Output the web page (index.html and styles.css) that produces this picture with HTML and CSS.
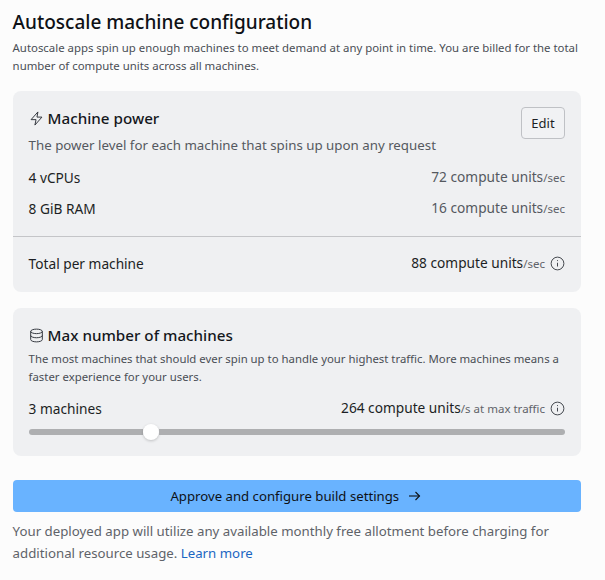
FILE: index.html
```html
<!DOCTYPE html>
<html lang="en">
<head>
  <meta charset="UTF-8">
  <meta name="viewport" content="width=device-width, initial-scale=1.0">
  <title>Autoscale machine configuration</title>
  <link rel="stylesheet" href="styles.css">
</head>
<body>

  <div class="page">
    <h1 class="title">Autoscale machine configuration</h1>
    <p class="intro">Autoscale apps spin up enough machines to meet demand at any point in time. You are billed for the total number of compute units across all machines.</p>

    <section class="card power-card">
      <div class="card-top">
        <div class="card-head">
          <h2 class="card-title">
            <svg class="head-icon" viewBox="0 0 16 16" fill="none" stroke="currentColor" stroke-width="1" stroke-linejoin="round"><path d="M9.5 1 2.2 9.2h5.3L6.3 15l7.5-8.5H8.5z"/></svg>
            Machine power
          </h2>
          <p class="card-sub">The power level for each machine that spins up upon any request</p>
        </div>
        <button class="edit-btn">Edit</button>
      </div>

      <div class="row spec-row">
        <span class="row-label">4 vCPUs</span>
        <span class="row-value muted">72 compute units<small>/sec</small></span>
      </div>
      <div class="row spec-row">
        <span class="row-label">8 GiB RAM</span>
        <span class="row-value muted">16 compute units<small>/sec</small></span>
      </div>

      <div class="row total-row">
        <span class="row-label">Total per machine</span>
        <span class="row-value">88 compute units<small>/sec</small>
          <svg class="info-icon" viewBox="0 0 16 16" fill="none" stroke="currentColor" stroke-width="1"><circle cx="8" cy="8" r="6.8"/><path d="M8 7.2v4"/><path d="M8 4.4v1"/></svg>
        </span>
      </div>
    </section>

    <section class="card machines-card">
      <h2 class="card-title">
        <svg class="head-icon" viewBox="0 0 16 16" fill="none" stroke="currentColor" stroke-width="1"><ellipse cx="8" cy="3.6" rx="6.2" ry="2.4"/><path d="M1.8 3.6v8.8c0 1.3 2.8 2.4 6.2 2.4s6.2-1.1 6.2-2.4V3.6"/><path d="M1.8 8c0 1.3 2.8 2.4 6.2 2.4s6.2-1.1 6.2-2.4"/></svg>
        Max number of machines
      </h2>
      <p class="machines-sub">The most machines that should ever spin up to handle your highest traffic. More machines means a faster experience for your users.</p>

      <div class="row machines-row">
        <span class="row-label">3 machines</span>
        <span class="row-value">264 compute units<small>/s at max traffic</small>
          <svg class="info-icon" viewBox="0 0 16 16" fill="none" stroke="currentColor" stroke-width="1"><circle cx="8" cy="8" r="6.8"/><path d="M8 7.2v4"/><path d="M8 4.4v1"/></svg>
        </span>
      </div>
      <div class="slider">
        <div class="slider-left"></div>
        <div class="slider-thumb"></div>
        <div class="slider-right"></div>
      </div>
    </section>

    <button class="approve-btn">
      Approve and configure build settings
      <svg class="arrow-icon" viewBox="0 0 16 16" fill="none" stroke="currentColor" stroke-width="1.1"><path d="M2 8h10.5"/><path d="M8.5 4l4 4-4 4"/></svg>
    </button>

    <p class="note">Your deployed app will utilize any available monthly free allotment before charging for<br>additional resource usage. <a href="#">Learn more</a></p>
  </div>

</body>
</html>
```

FILE: styles.css
```css
body {
  margin: 0;
  padding: 0;
  font-family: "Noto Sans", "Open Sans", sans-serif;
  background: #fcfcfc;
  color: #1c1f24;
}

.page {
  width: 568.4px;
  padding: 10px 0 0 12.6px;
}

.title {
  margin: 0;
  font-size: 19px;
  line-height: 24px;
  font-weight: 500;
  color: #0e1116;
}

.intro {
  margin: 5px 0 0;
  font-size: 11.4px;
  line-height: 18px;
  color: #4a4e55;
}

.card {
  background: #eff0f2;
  border-radius: 8px;
}

.power-card {
  margin-top: 16px;
  height: 201px;
  box-sizing: border-box;
  padding-top: 16px;
}

.card-top {
  display: flex;
  justify-content: space-between;
  padding: 0 16px;
}

.card-title {
  display: flex;
  align-items: center;
  gap: 4px;
  margin: 0;
  font-size: 15.2px;
  line-height: 22px;
  font-weight: 500;
  color: #14171c;
}

.head-icon {
  width: 15px;
  height: 15px;
  color: #2b2f36;
}

.card-sub {
  margin: 7px 0 0;
  font-size: 13.3px;
  line-height: 18px;
  color: #55595f;
}

.edit-btn {
  width: 44px;
  height: 32px;
  padding: 0;
  font-family: inherit;
  font-size: 13px;
  color: #1c1f24;
  background: #f1f2f4;
  border: 1px solid #bfc1c5;
  border-radius: 4px;
}

.row {
  display: flex;
  justify-content: space-between;
  align-items: center;
  font-size: 13.7px;
  line-height: 20px;
}

.row-value {
  display: flex;
  align-items: baseline;
}

.row-value small {
  font-size: 11.5px;
  color: #5f6369;
}

.muted {
  color: #55595f;
}

.spec-row {
  padding: 0 16px;
  margin-top: 10px;
}

.card-top + .spec-row {
  margin-top: 13px;
}

.total-row {
  margin-top: 17px;
  padding: 16px 16px 0;
  border-top: 1px solid #c4c5c8;
}

.info-icon {
  width: 15px;
  height: 15px;
  margin-left: 5px;
  align-self: center;
  color: #3a3e44;
}

.machines-card {
  margin-top: 16px;
  height: 148px;
  box-sizing: border-box;
  padding: 16px 16px 0;
}

.machines-sub {
  margin: 4px 0 0;
  font-size: 11.37px;
  line-height: 18px;
  color: #4a4e55;
}

.machines-row {
  margin-top: 12px;
}

.slider {
  display: flex;
  align-items: center;
  margin-top: 4px;
  height: 18px;
}

.slider-left {
  width: 114px;
  height: 6px;
  background: #aeafb1;
  border-radius: 3px 0 0 3px;
}

.slider-thumb {
  width: 16px;
  height: 16px;
  border-radius: 50%;
  background: #ffffff;
  box-shadow: 0 1px 3px rgba(0, 0, 0, 0.2);
}

.slider-right {
  flex: 1;
  height: 6px;
  background: #aeafb1;
  border-radius: 0 3px 3px 0;
}

.approve-btn {
  display: flex;
  justify-content: center;
  align-items: center;
  gap: 8px;
  width: 100%;
  height: 32px;
  margin-top: 24px;
  padding: 0;
  font-family: inherit;
  font-size: 13.2px;
  color: #0e1116;
  background: #69b3ff;
  border: none;
  border-radius: 4px;
}

.arrow-icon {
  width: 16px;
  height: 16px;
}

.note {
  margin: 8px 0 0;
  font-size: 13.25px;
  line-height: 22px;
  color: #5f6369;
}

.note a {
  color: #1a66c2;
  text-decoration: none;
}
```
